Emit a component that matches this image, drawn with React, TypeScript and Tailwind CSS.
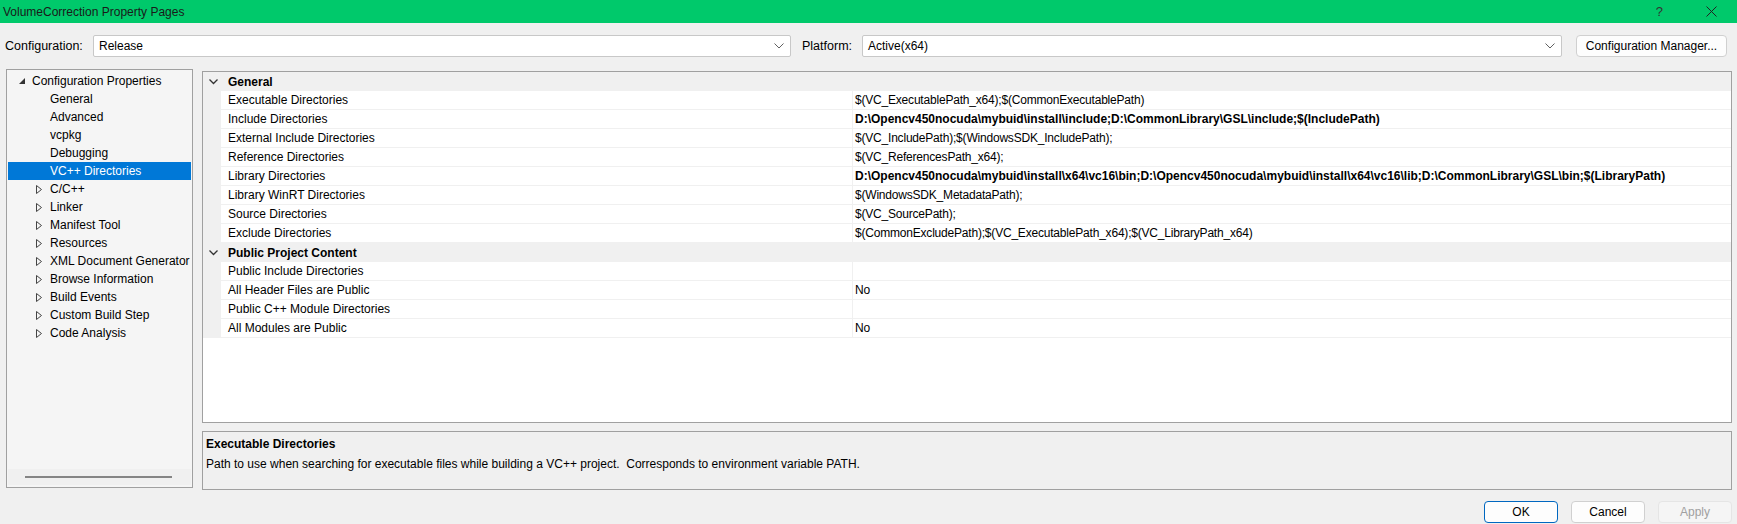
import React from "react";

const treeItems: { label: string; kind: "leaf" | "collapsed"; selected?: boolean }[] = [
  { label: "General", kind: "leaf" },
  { label: "Advanced", kind: "leaf" },
  { label: "vcpkg", kind: "leaf" },
  { label: "Debugging", kind: "leaf" },
  { label: "VC++ Directories", kind: "leaf", selected: true },
  { label: "C/C++", kind: "collapsed" },
  { label: "Linker", kind: "collapsed" },
  { label: "Manifest Tool", kind: "collapsed" },
  { label: "Resources", kind: "collapsed" },
  { label: "XML Document Generator", kind: "collapsed" },
  { label: "Browse Information", kind: "collapsed" },
  { label: "Build Events", kind: "collapsed" },
  { label: "Custom Build Step", kind: "collapsed" },
  { label: "Code Analysis", kind: "collapsed" },
];

type Row = { name: string; value: string; bold?: boolean };

const groups: { title: string; rows: Row[] }[] = [
  {
    title: "General",
    rows: [
      { name: "Executable Directories", value: "$(VC_ExecutablePath_x64);$(CommonExecutablePath)" },
      {
        name: "Include Directories",
        value: "D:\\Opencv450nocuda\\mybuid\\install\\include;D:\\CommonLibrary\\GSL\\include;$(IncludePath)",
        bold: true,
      },
      { name: "External Include Directories", value: "$(VC_IncludePath);$(WindowsSDK_IncludePath);" },
      { name: "Reference Directories", value: "$(VC_ReferencesPath_x64);" },
      {
        name: "Library Directories",
        value:
          "D:\\Opencv450nocuda\\mybuid\\install\\x64\\vc16\\bin;D:\\Opencv450nocuda\\mybuid\\install\\x64\\vc16\\lib;D:\\CommonLibrary\\GSL\\bin;$(LibraryPath)",
        bold: true,
      },
      { name: "Library WinRT Directories", value: "$(WindowsSDK_MetadataPath);" },
      { name: "Source Directories", value: "$(VC_SourcePath);" },
      {
        name: "Exclude Directories",
        value: "$(CommonExcludePath);$(VC_ExecutablePath_x64);$(VC_LibraryPath_x64)",
      },
    ],
  },
  {
    title: "Public Project Content",
    rows: [
      { name: "Public Include Directories", value: "" },
      { name: "All Header Files are Public", value: "No" },
      { name: "Public C++ Module Directories", value: "" },
      { name: "All Modules are Public", value: "No" },
    ],
  },
];

function ComboChevron() {
  return (
    <svg width="10" height="6" viewBox="0 0 10 6" className="text-[#606060]">
      <path d="M0.5 0.5 L5 5 L9.5 0.5" fill="none" stroke="currentColor" strokeWidth="1" />
    </svg>
  );
}

function GroupChevron() {
  return (
    <svg width="9" height="6" viewBox="0 0 9 6">
      <path d="M0.5 0.5 L4.5 4.5 L8.5 0.5" fill="none" stroke="#333" strokeWidth="1.3" />
    </svg>
  );
}

export default function App() {
  return (
    <div
      className="flex h-[524px] w-[1737px] flex-col overflow-hidden bg-[#f0f0f0] text-[12px] text-black"
      style={{ fontFamily: '"Liberation Sans", Arial, sans-serif' }}>
      {/* Title bar */}
      <div className="flex h-[23px] items-center bg-[#00c96b] pl-[3px]">
        <span className="text-[12px] text-[#1a1a1a]">VolumeCorrection Property Pages</span>
        <span className="ml-auto mr-[43px] text-[13px] text-[#333]">?</span>
        <svg width="11" height="11" viewBox="0 0 11 11" className="mr-[20px]">
          <path d="M0.5 0.5 L10.5 10.5 M10.5 0.5 L0.5 10.5" stroke="#222" strokeWidth="1" />
        </svg>
      </div>

      {/* Configuration row */}
      <div className="mt-[12px] flex h-[22px] items-center">
        <span className="ml-[5px] w-[88px] text-[12.5px]">Configuration:</span>
        <div className="flex h-full w-[698px] items-center rounded-[2px] border border-[#c8c8c8] bg-white pl-[5px] pr-[6px]">
          <span>Release</span>
          <span className="ml-auto">
            <ComboChevron />
          </span>
        </div>
        <span className="ml-[11px] w-[60px] text-[12.5px]">Platform:</span>
        <div className="flex h-full w-[700px] items-center rounded-[2px] border border-[#c8c8c8] bg-white pl-[5px] pr-[6px]">
          <span>Active(x64)</span>
          <span className="ml-auto">
            <ComboChevron />
          </span>
        </div>
        <button className="ml-[14px] h-full w-[151px] rounded-[4px] border border-[#d0d0d0] bg-[#fdfdfd] text-[12px]">
          Configuration Manager...
        </button>
      </div>

      {/* Main area */}
      <div className="mt-[12px] flex h-[421px]">
        {/* Tree */}
        <div className="ml-[6px] flex h-[419px] w-[187px] flex-col border border-[#a0a0a0] bg-[#f5f5f5] px-[1px] pt-[2px]">
          <div className="flex h-[18px] items-center">
            <svg width="6" height="6" viewBox="0 0 6 6" className="ml-[11px]">
              <polygon points="6,0 6,6 0,6" fill="#333" />
            </svg>
            <span className="ml-[7px]">Configuration Properties</span>
          </div>
          {treeItems.map((item) => (
            <div
              key={item.label}
              className={`flex h-[18px] items-center ${item.selected ? "bg-[#0078d7] text-white" : ""}`}>
              {item.kind === "collapsed" ? (
                <svg width="6" height="9" viewBox="0 0 6 9" className="ml-[28px] mr-[8px]">
                  <polygon points="0.5,0.5 5.5,4.5 0.5,8.5" fill="none" stroke="#444" strokeWidth="1" />
                </svg>
              ) : (
                <span className="w-[42px]" />
              )}
              <span className="whitespace-nowrap">{item.label}</span>
            </div>
          ))}
          <div className="mt-auto mb-[2px] flex h-[16px] items-center bg-[#f0f0f0]">
            <div className="ml-[17px] h-[2px] w-[147px] bg-[#858585]" />
          </div>
        </div>

        {/* Right column */}
        <div className="ml-[9px] mt-[2px] flex w-[1530px] flex-col">
          <div className="flex h-[353px] flex-col border border-[#a0a0a0] bg-white">
            {groups.map((g) => (
              <div key={g.title}>
                <div className="flex h-[19px] items-center bg-[#f0f0f0]">
                  <span className="ml-[6px] w-[19px]">
                    <GroupChevron />
                  </span>
                  <span className="font-bold">{g.title}</span>
                </div>
                {g.rows.map((r) => (
                  <div key={r.name} className="flex h-[19px]">
                    <div className="w-[18px] bg-[#f0f0f0]" />
                    <div className="flex w-[631px] items-center border-b border-[#f0f0f0] pl-[7px]">
                      {r.name}
                    </div>
                    <div
                      className={`flex flex-1 items-center whitespace-nowrap border-b border-l border-[#f0f0f0] pl-[2px] ${
                        r.bold ? "font-bold" : "tracking-[-0.2px]"
                      }`}>
                      {r.value}
                    </div>
                  </div>
                ))}
              </div>
            ))}
          </div>
          <div className="mt-[8px] flex h-[59px] flex-col border border-[#a0a0a0] bg-[#f0f0f0] pl-[3px] pt-[3px]">
            <span className="font-bold">Executable Directories</span>
            <span className="mt-[2px] whitespace-pre">
              Path to use when searching for executable files while building a VC++ project.  Corresponds to environment variable PATH.
            </span>
          </div>
        </div>
      </div>

      {/* Buttons */}
      <div className="mt-[11px] flex h-[22px] justify-end gap-[13px] pr-[5px]">
        <button className="w-[74px] rounded-[4px] border border-[#0067c0] bg-[#fdfdfd]">OK</button>
        <button className="w-[74px] rounded-[4px] border border-[#d0d0d0] bg-[#fdfdfd]">Cancel</button>
        <button className="w-[74px] rounded-[4px] border border-[#e5e5e5] bg-[#f5f5f5] text-[#a0a0a0]">
          Apply
        </button>
      </div>
    </div>
  );
}
